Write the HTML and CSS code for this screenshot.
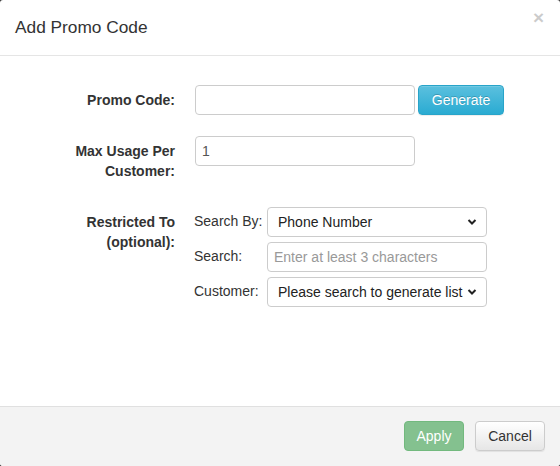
FILE: index.html
```html
<!DOCTYPE html>
<html>
<head>
<meta charset="utf-8">
<link rel="stylesheet" href="styles.css">
</head>
<body>
<div class="modal">
  <div class="modal-header">
    <h4 class="title">Add Promo Code</h4>
    <span class="close">&times;</span>
  </div>
  <div class="modal-body">
    <div class="row">
      <label class="label">Promo Code:</label>
      <div class="field">
        <input class="input w220" type="text">
        <button class="btn btn-info">Generate</button>
      </div>
    </div>
    <div class="row">
      <label class="label">Max Usage Per Customer:</label>
      <div class="field">
        <input class="input w220" type="text" value="1">
      </div>
    </div>
    <div class="row row-restrict">
      <label class="label">Restricted To (optional):</label>
      <div class="subgrid">
        <span class="sublabel">Search By:</span>
        <div class="select">Phone Number<svg class="chev" viewBox="0 0 10 8" width="10" height="8"><path d="M1.5 2 L5 5.5 L8.5 2" fill="none" stroke="#222" stroke-width="2"/></svg></div>
        <span class="sublabel">Search:</span>
        <div class="input sub placeholder">Enter at least 3 characters</div>
        <span class="sublabel">Customer:</span>
        <div class="select">Please search to generate list<svg class="chev" viewBox="0 0 10 8" width="10" height="8"><path d="M1.5 2 L5 5.5 L8.5 2" fill="none" stroke="#222" stroke-width="2"/></svg></div>
      </div>
    </div>
  </div>
  <div class="modal-footer">
    <button class="btn btn-success">Apply</button>
    <button class="btn btn-default">Cancel</button>
  </div>
</div>
</body>
</html>
```
FILE: styles.css
```css
html, body {
  margin: 0;
  padding: 0;
  background: #333;
}
body {
  font-family: "Liberation Sans", Arial, sans-serif;
  font-size: 14px;
  color: #333;
}
.modal {
  width: 560px;
  height: 466px;
  background: #fff;
  border-radius: 3px;
  display: flex;
  flex-direction: column;
  overflow: hidden;
}
.modal-header {
  height: 56px;
  box-sizing: border-box;
  border-bottom: 1px solid #e5e5e5;
  position: relative;
  padding: 15px;
}
.title {
  margin: 0;
  font-size: 17.3px;
  font-weight: normal;
  line-height: 25px;
  color: #333;
}
.close {
  position: absolute;
  right: 16px;
  top: 8px;
  font-size: 19px;
  font-weight: bold;
  color: #000;
  opacity: 0.2;
  line-height: 20px;
}
.modal-body {
  flex: 1;
  padding: 29px 15px 0 15px;
  display: flex;
  flex-direction: column;
  gap: 21px;
}
.row {
  display: flex;
  align-items: flex-start;
}
.row-restrict { margin-top: 5px; }
.label {
  width: 160px;
  text-align: right;
  font-weight: bold;
  line-height: 20px;
  padding-top: 5px;
  box-sizing: border-box;
  padding-left: 50px;
  margin-right: 20px;
}
.field {
  display: flex;
  gap: 3px;
  align-items: flex-start;
}
.input {
  box-sizing: border-box;
  height: 30px;
  border: 1px solid #ccc;
  border-radius: 4px;
  padding: 5px 6px;
  font-family: inherit;
  font-size: 14px;
  color: #555;
  background: #fff;
  margin: 0;
  line-height: 18px;
  outline: none;
}
.w220 { width: 220px; }
.btn {
  box-sizing: border-box;
  height: 30px;
  border-radius: 4px;
  font-family: inherit;
  font-size: 14px;
  padding: 4px 12px;
  margin: 0;
  line-height: 20px;
}
.btn-info {
  width: 86px;
  color: #fff;
  border: 1px solid #28a4c9;
  background: linear-gradient(#5bc0de, #2aabd2);
  text-shadow: 0 -1px 0 rgba(0,0,0,.2);
  box-shadow: inset 0 1px 0 rgba(255,255,255,.15), 0 1px 1px rgba(0,0,0,.075);
}
.subgrid {
  display: grid;
  grid-template-columns: 73px 220px;
  row-gap: 5px;
  margin-left: -1px;
}
.sublabel {
  line-height: 20px;
  padding-top: 4px;
  color: #333;
}
.select {
  box-sizing: border-box;
  height: 30px;
  border: 1px solid #ccc;
  border-radius: 4px;
  padding: 5px 10px;
  line-height: 18px;
  color: #222;
  display: flex;
  justify-content: space-between;
  align-items: center;
  white-space: nowrap;
}
.chev { flex: none; margin-left: 4px; margin-right: -1px; }
.sub { width: 220px; padding-left: 6px; }
.placeholder { color: #999; }
.modal-footer {
  height: 60px;
  box-sizing: border-box;
  background: #f3f3f3;
  border-top: 1px solid #e0e0e0;
  display: flex;
  justify-content: flex-end;
  align-items: flex-start;
  padding: 14px 15px 0 15px;
  gap: 11px;
}
.btn-success {
  width: 60px;
  color: #fff;
  border: 1px solid #72b97e;
  background: #84c18f;
  padding: 4px 8px;
}
.btn-default {
  width: 70px;
  color: #333;
  border: 1px solid #ccc;
  background: linear-gradient(#fff, #e6e6e6);
  box-shadow: 0 1px 1px rgba(0,0,0,.075);
}
```
